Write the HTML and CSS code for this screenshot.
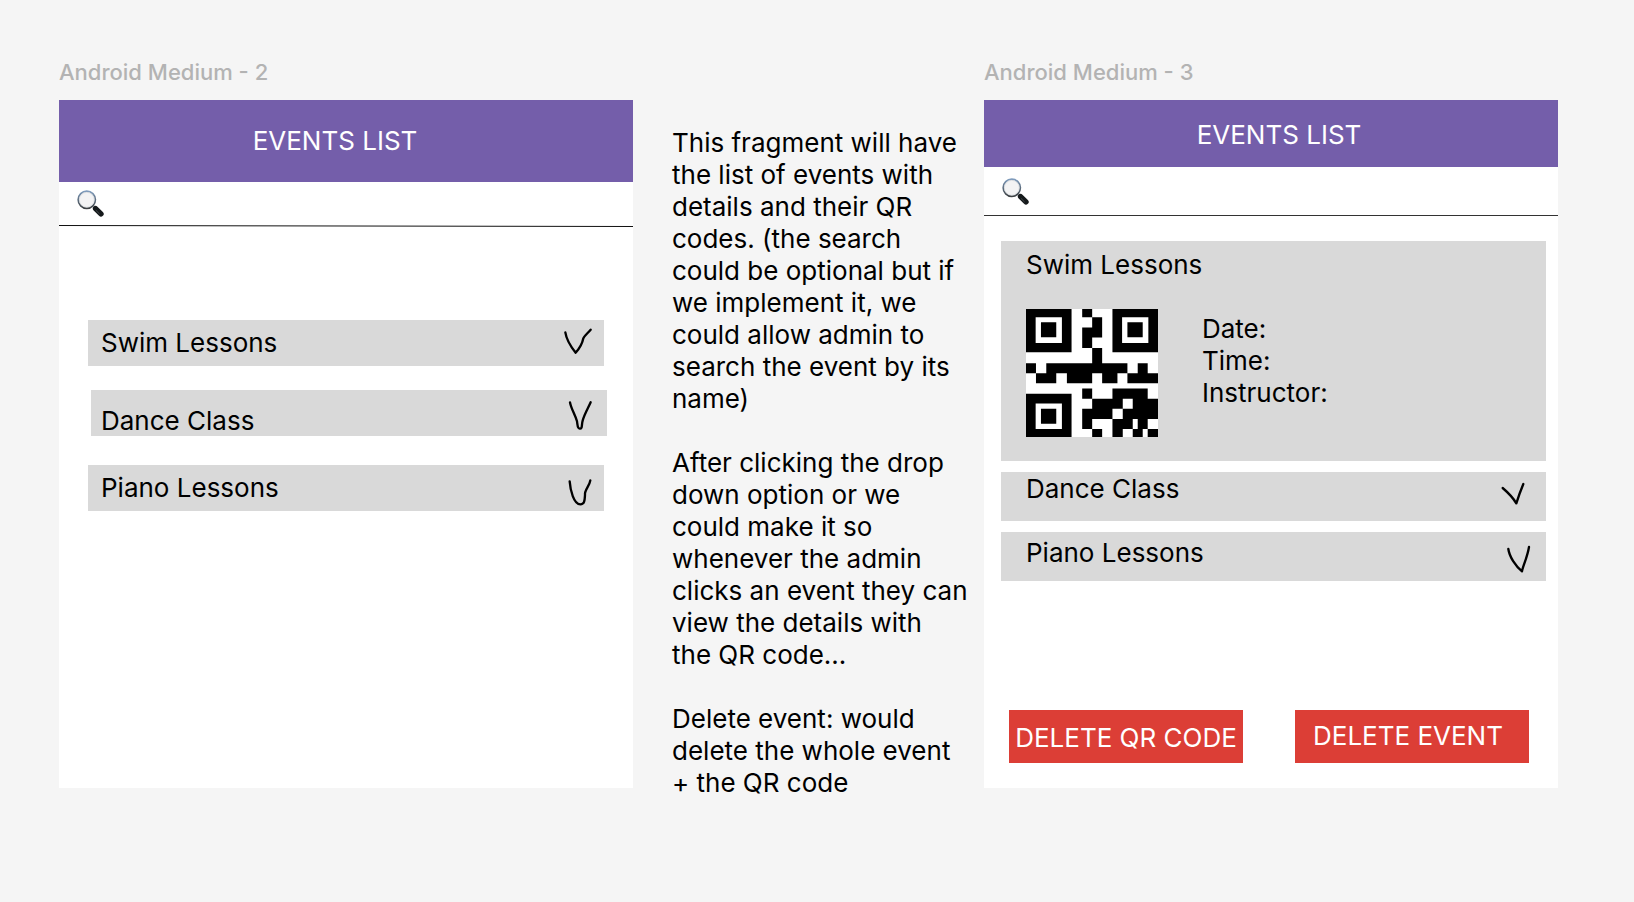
FILE: index.html
```html
<!DOCTYPE html>
<html lang="en">
<head>
<meta charset="utf-8">
<title>Events list</title>
<link rel="stylesheet" href="styles.css">
</head>
<body>
<svg class="defs" aria-hidden="true">
  <defs>
    <linearGradient id="rim" x1="0" y1="0" x2="0" y2="1">
      <stop offset="0" stop-color="#7f9cbd"/>
      <stop offset="1" stop-color="#3c4043"/>
    </linearGradient>
    <symbol id="magnifier" viewBox="0 0 80 80">
      <path d="M49 49l7 7" stroke="#666" stroke-width="8"/>
      <path d="M55 55L71 71" stroke="#15191b" stroke-width="16" stroke-linecap="round"/>
      <path d="M56 60L67 71" stroke="#596064" stroke-width="2"/>
      <circle cx="29" cy="29" r="25.500" fill="#f3f3f4" stroke="url(#rim)" stroke-width="5"/>
      <circle cx="29" cy="29" r="22" fill="none" stroke="#d5d8db" stroke-width="2"/>
    </symbol>
  </defs>
</svg>
<main class="board">
  <section class="screen">
    <h2 class="screen-label">Android Medium - 2</h2>
    <div class="frame">
      <header class="bar bar-tall"><h1 class="bar-title">EVENTS LIST</h1></header>
      <div class="search search-short">
        <label class="search-label" for="search-a" aria-label="Search events"><svg class="search-icon"><use href="#magnifier"/></svg></label>
        <input class="search-input" id="search-a" type="text">
      </div>
      <svg class="rule" viewBox="0 0 574 2" preserveAspectRatio="none" aria-hidden="true"><path d="M0 .5L574 1.500" stroke="#111" stroke-width="1"/></svg>
      <ul class="events events-closed">
        <li><button class="event" type="button">Swim Lessons
          <svg class="tick" viewBox="0 0 96 96"><path d="M10 16C13 36 25 57 41 77C55 62 61 49 64 34C67 26 78 18 86 8"/></svg></button></li>
        <li class="shifted"><button class="event event-low" type="button">Dance Class
          <svg class="tick" viewBox="0 0 96 96"><path d="M15 13C18 32 31 50 36 70C38 82 37 92 44 92C53 93 49 82 53 68C58 49 69 31 77 13"/></svg></button></li>
        <li><button class="event" type="button">Piano Lessons
          <svg class="tick" viewBox="0 0 96 96"><path d="M23 28C25 54 35 97 55 97C68 97 68 85 69 69C67 54 82 44 85 25"/></svg></button></li>
      </ul>
    </div>
  </section>

  <aside class="note">
    <p>This fragment will have the list of events with details and their QR codes. (the search could be optional but if we implement it, we could allow admin to search the event by its name)</p>
    <p>After clicking the drop down option or we could make it so whenever the admin clicks an event they can view the details with the&nbsp;QR code...</p>
    <p>Delete event: would delete the whole event + the QR code</p>
  </aside>

  <section class="screen">
    <h2 class="screen-label">Android Medium - 3</h2>
    <div class="frame">
      <header class="bar"><h1 class="bar-title">EVENTS LIST</h1></header>
      <div class="search search-lined">
        <label class="search-label" for="search-b" aria-label="Search events"><svg class="search-icon"><use href="#magnifier"/></svg></label>
        <input class="search-input" id="search-b" type="text">
      </div>
      <ul class="events events-open">
        <li class="card">
          <h3 class="card-title">Swim Lessons</h3>
          <div class="card-body">
            <svg class="qr" viewBox="0 0 397 385" preserveAspectRatio="none" role="img" aria-label="QR code">
              <path fill="#fff" d="M0 0h397v385H0z"/>
              <path fill-rule="evenodd" d="M0 0h137v130H0zM29 25v77h79V25zM45 40h46v45H45zM260 0h137v130H260zM289 25v77h79V25zM305 40h46v45h-46zM0 255h137v130H0zM29 284v77h79v-77zM45 300h46v45H45z"/>
              <path d="M169 0h30v25h-30zM199 25h30v31h-30zM169 56h60v30h-60zM169 86h30v31h-30zM199 117h30v46h-30zM0 163h30v30H0zM61 163h244v30H61zM336 163h30v30h-30zM30 193h61v30H30zM123 193h76v30h-76zM229 193h46v30h-46zM305 193h92v30h-92z"/>
              <path d="M169 239h30v31h-30zM260 239h106v31H260zM199 270h92v30h-92zM321 270h76v30h-76zM169 300h91v31h-91zM291 300h106v31H291zM169 331h30v30h-30zM260 331h61v30h-61zM336 331h30v30h-30zM199 361h30v24h-30zM260 361h31v24h-31zM321 361h30v24h-30zM366 361h31v24h-31z"/>
            </svg>
            <ul class="details"><li>Date:</li><li>Time:</li><li>Instructor:</li></ul>
          </div>
        </li>
        <li><button class="event event-high" type="button">Dance Class
          <svg class="tick" viewBox="0 0 96 96"><path d="M-4 21Q24 45 37 67Q46 38 58 9"/></svg></button></li>
        <li><button class="event event-raised" type="button">Piano Lessons
          <svg class="tick" viewBox="0 0 96 96"><path d="M13 24C16 47 35 76 54 91C57 74 70 49 75 18"/></svg></button></li>
      </ul>
      <div class="actions">
        <button class="delete delete-code" type="button">DELETE QR CODE</button>
        <button class="delete delete-event" type="button">DELETE EVENT</button>
      </div>
    </div>
  </section>
</main>
</body>
</html>
```
FILE: styles.css
```css
* {
  box-sizing: border-box;
}

body {
  margin: 0;
  background: #f5f5f5;
  color: #000;
  font: 400 26px/32px Inter, "Liberation Sans", sans-serif;
}

h1, h2, h3, p, ul {
  margin: 0;
  padding: 0;
  font-size: 26px;
  font-weight: 400;
}

ul {
  list-style: none;
}

button, input {
  font: inherit;
  color: inherit;
  border: 0;
}

.defs {
  position: absolute;
  width: 0;
  height: 0;
}

.board {
  display: grid;
  grid-template-columns: minmax(0, 574fr) minmax(0, 351fr) minmax(0, 574fr);
  padding: 56px 76px 114px 59px;
}

.screen {
  display: flex;
  flex-direction: column;
}

.screen-label {
  height: 44px;
  color: #b3b3b3;
  font-size: 22px;
  font-weight: 500;
}

.frame {
  display: flex;
  flex: 1;
  flex-direction: column;
  background: #fff;
}

.bar {
  display: flex;
  justify-content: center;
  padding: 19px 0 16px 16px;
  background: #745eaa;
  color: #fff;
}

.bar-tall {
  padding: 25px 22px 25px 0;
}

.search {
  display: flex;
  align-items: center;
  padding: 0 18px;
}

.search-short {
  height: 43px;
}

.search-lined {
  height: 49px;
  border-bottom: 1px solid #333;
}

.search-label,
.search-icon {
  display: block;
  width: 27px;
  height: 27px;
}

.search-input {
  flex: 1;
  min-width: 0;
  height: 32px;
  background: transparent;
  outline: 0;
}

.rule {
  display: block;
  width: 100%;
  height: 2px;
}

.events {
  display: flex;
  flex-direction: column;
}

.events-closed {
  gap: 27px;
  padding: 93px 29px 0;
}

.shifted {
  margin: -3px -3px 2px 3px;
}

.events-open {
  gap: 11px;
  padding: 25px 12px 0 17px;
}

.event {
  display: flex;
  align-items: center;
  justify-content: space-between;
  width: 100%;
  height: 46px;
  padding: 0 10px 0 13px;
  background: #d9d9d9;
  text-align: left;
}

.event-low {
  padding: 16px 10px 0;
}

.event-high {
  height: 49px;
  padding: 0 10px 16px 25px;
}

.event-raised {
  height: 49px;
  padding: 0 10px 8px 25px;
}

.tick {
  flex: none;
  width: 32px;
  height: 32px;
  overflow: visible;
  fill: none;
  stroke: #000;
  stroke-width: 7;
  stroke-linecap: round;
  stroke-linejoin: round;
}

.event-low .tick {
  margin-top: -14px;
}

.event-high .tick {
  margin-bottom: -16px;
}

.event-raised .tick {
  margin-bottom: -8px;
}

.card {
  padding: 8px 25px 24px;
  background: #d9d9d9;
}

.card-body {
  display: flex;
  gap: 44px;
  padding-top: 28px;
}

.qr {
  flex: none;
  width: 132px;
  height: 128px;
}

.details {
  padding-top: 4px;
}

/* The last line of the note hangs below the frames beside it. */
.note {
  display: flex;
  flex-direction: column;
  gap: 32px;
  margin-bottom: -11px;
  padding: 71px 13px 0 39px;
}

.actions {
  display: grid;
  grid-template-columns: 1fr 1fr;
  gap: 52px;
  margin-top: auto;
  padding: 0 29px 25px 25px;
}

.delete {
  height: 53px;
  padding: 0;
  background: #dc3e36;
  color: #fff;
  white-space: nowrap;
}

.delete-code {
  padding-top: 3px;
}

.delete-event {
  padding: 0 8px 1px 0;
}
```
